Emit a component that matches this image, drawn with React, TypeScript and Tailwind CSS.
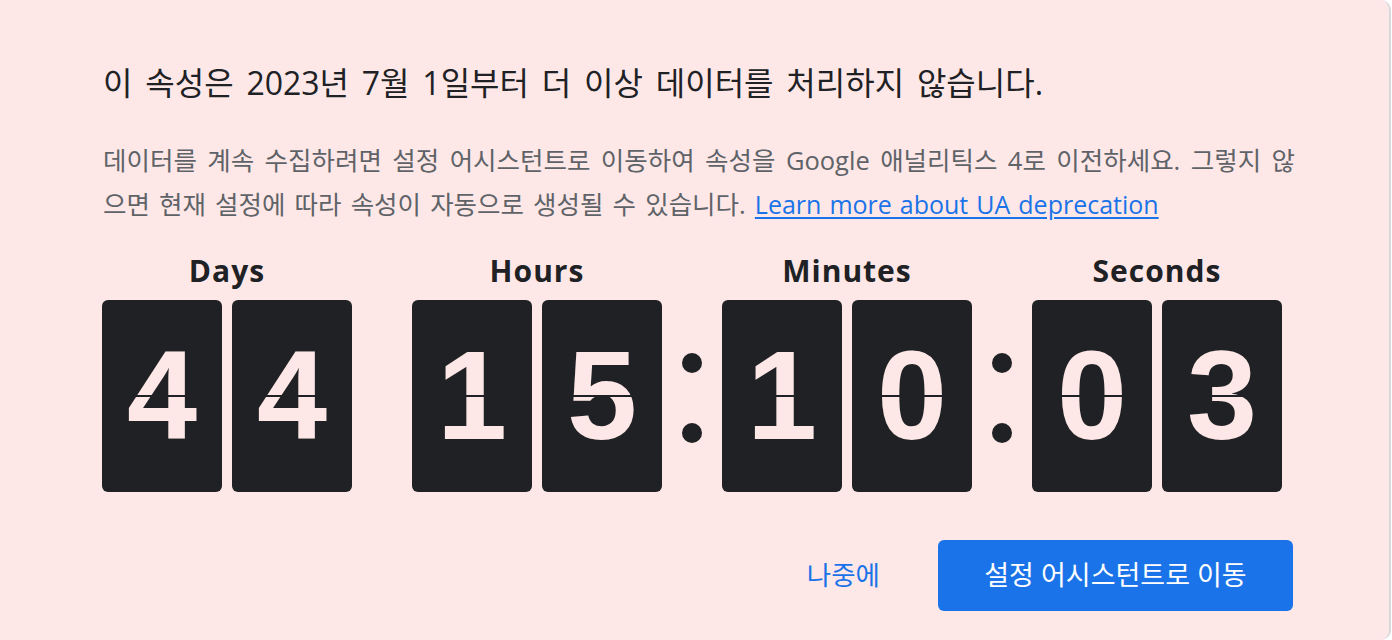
import React from "react";

const sans = { fontFamily: '"Open Sans", "Noto Sans CJK KR", sans-serif' };

const Digit = ({ value }: { value: string }) => (
  <div className="relative flex h-[192px] w-[120px] items-center justify-center rounded-[6px] bg-[#202124]">
    <span className="font-['Liberation_Sans',sans-serif] text-[126px] font-bold leading-none text-[#fde8e7]">
      {value}
    </span>
    <div className="absolute left-0 right-0 top-[95px] h-[2px] bg-[#202124]" />
  </div>
);

const Colon = () => (
  <div className="flex h-[192px] w-[60px] flex-col items-center justify-center gap-[50px] pt-[4px]">
    <div className="h-[20px] w-[20px] rounded-full bg-[#202124]" />
    <div className="h-[20px] w-[20px] rounded-full bg-[#202124]" />
  </div>
);

const Unit = ({ label, value }: { label: string; value: string }) => (
  <div className="flex flex-col items-center">
    <div className="h-[36px] text-[30px] font-bold leading-[36px] tracking-[1px] text-[#202124]">{label}</div>
    <div className="mt-[11px] flex gap-[10px]">
      <Digit value={value[0]} />
      <Digit value={value[1]} />
    </div>
  </div>
);

export default function App() {
  return (
    <div className="h-[640px] w-full overflow-hidden bg-white" style={sans}>
      <div className="h-[640px] w-[1391px] rounded-r-[10px] border-r-2 border-[#d5d8dd] bg-[#fde8e7] pl-[103px] pr-[96px] pt-[63px]">
        <h1 className="text-[32px] font-normal leading-[40px] text-[#202124] [word-spacing:4.5px]">
          이 속성은 2023년 7월 1일부터 더 이상 데이터를 처리하지 않습니다.
        </h1>
        <p className="mt-[35px] w-[1192px] text-justify text-[25.5px] leading-[44px] text-[#5f6368] [word-spacing:2.5px]">
          데이터를 계속 수집하려면 설정 어시스턴트로 이동하여 속성을 Google 애널리틱스 4로 이전하세요. 그렇지 않으면 현재 설정에 따라 속성이 자동으로 생성될 수 있습니다.{" "}
          <a href="#" className="text-[25px] text-[#1a73e8] underline underline-offset-[3px] [word-spacing:1.5px]">
            Learn more about UA deprecation
          </a>
        </p>
        <div className="-ml-px mt-[27px] flex items-end">
          <Unit label="Days" value="44" />
          <div className="w-[60px]" />
          <Unit label="Hours" value="15" />
          <Colon />
          <Unit label="Minutes" value="10" />
          <Colon />
          <Unit label="Seconds" value="03" />
        </div>
        <div className="mt-[48px] flex items-center justify-end gap-[58px]">
          <button className="text-[26.5px] text-[#1a73e8]">나중에</button>
          <button className="h-[71px] w-[355px] rounded-[6px] bg-[#1a73e8] text-[27px] text-white">
            설정 어시스턴트로 이동
          </button>
        </div>
      </div>
    </div>
  );
}
